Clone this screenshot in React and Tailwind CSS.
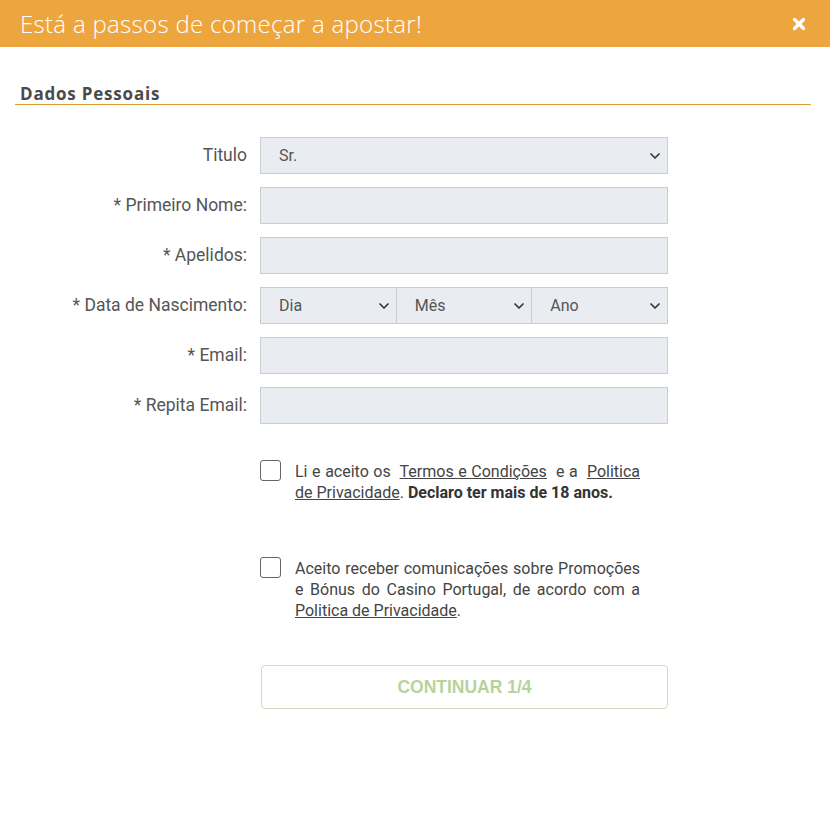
import React from "react";
import { ChevronDown, X } from "lucide-react";

const FIELDS = [
  { label: "Titulo", type: "select", value: "Sr." },
  { label: "* Primeiro Nome:", type: "input" },
  { label: "* Apelidos:", type: "input" },
  { label: "* Data de Nascimento:", type: "date" },
  { label: "* Email:", type: "input" },
  { label: "* Repita Email:", type: "input" },
];

function Select({ value, className = "" }) {
  return (
    <div className={`flex items-center justify-between h-[37px] bg-[#e9ecf1] border border-[#c8ccd3] pl-[18px] pr-[4px] text-[#555] ${className}`}>
      <span>{value}</span>
      <ChevronDown className="w-[16px] h-[16px] text-[#333]" strokeWidth={2.5} />
    </div>
  );
}

function Checkbox() {
  return <span className="w-[21px] h-[21px] shrink-0 rounded-[3px] border-[1.5px] border-[#666]" />;
}

export default function App() {
  return (
    <div className="w-[830px] h-[817px] bg-white" style={{ fontFamily: "Roboto, sans-serif" }}>
      {/* Header */}
      <div className="flex items-center justify-between h-[47px] bg-[#eda63e] pl-[20px] pr-[22px]">
        <h1 className="text-white text-[24px] font-light tracking-[0.3px]" style={{ fontFamily: "'Open Sans', sans-serif" }}>Está a passos de começar a apostar!</h1>
        <X className="w-[18px] h-[18px] text-white" strokeWidth={4.5} />
      </div>

      <div className="pl-[15px] pr-[19px] pt-[36px]">
        <h2 className="pl-[5px] leading-[21px] text-[17px] font-bold tracking-[0.8px] text-[#4a4a4a]" style={{ fontFamily: "'Open Sans', sans-serif" }}>Dados Pessoais</h2>
        <div className="h-px bg-[#d99f2c]" />
      </div>

      {/* Form rows */}
      <div className="flex flex-col gap-[13px] pt-[32px] text-[16px]">
        {FIELDS.map((f) => (
          <div key={f.label} className="flex items-center">
            <label className="w-[247px] text-right text-[#555] text-[17.5px]">{f.label}</label>
            <div className="ml-[13px] w-[408px]">
              {f.type === "select" && <Select value={f.value} />}
              {f.type === "input" && <div className="h-[37px] bg-[#e9ecf1] border border-[#c8ccd3]" />}
              {f.type === "date" && (
                <div className="flex">
                  <Select value="Dia" className="flex-1" />
                  <Select value="Mês" className="flex-1 border-l-0" />
                  <Select value="Ano" className="flex-1 border-l-0" />
                </div>
              )}
            </div>
          </div>
        ))}
      </div>

      {/* Consents */}
      <div className="ml-[260px] mt-[36px] w-[380px] text-[16px] leading-[21px] text-[#444]">
        <div className="flex">
          <Checkbox />
          <p className="ml-[14px] mt-[1px] text-justify">
            Li e aceito os&nbsp; <span className="underline">Termos e Condições</span>&nbsp; e a&nbsp; <span className="underline">Politica de Privacidade</span>.{" "}
            <span className="font-bold text-[#333]">Declaro ter mais de 18 anos.</span>
          </p>
        </div>
        <div className="flex mt-[54px]">
          <Checkbox />
          <p className="ml-[14px] mt-[1px] text-justify">
            Aceito receber comunicações sobre Promoções e Bónus do Casino Portugal, de acordo com a{" "}
            <span className="underline">Politica de Privacidade</span>.
          </p>
        </div>
      </div>

      <div className="pl-[261px] pt-[44px]">
        <button className="w-[407px] h-[44px] rounded-[4px] border border-[#cfdcbf] bg-white text-[#b6d39b] font-bold text-[17.5px]" style={{ fontFamily: "'Liberation Sans', Arial, sans-serif" }}>
          CONTINUAR 1/4
        </button>
      </div>
    </div>
  );
}
